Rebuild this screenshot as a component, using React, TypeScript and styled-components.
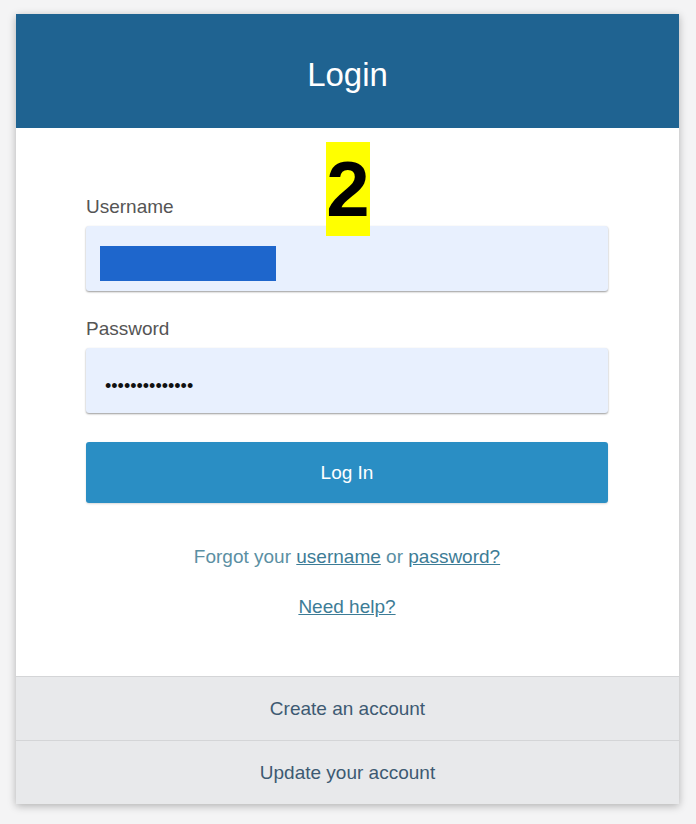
import React from 'react';
import styled, { createGlobalStyle } from 'styled-components';

const GlobalStyle = createGlobalStyle`
  html, body {
    margin: 0;
    padding: 0;
    background: #f4f4f5;
    font-family: "Liberation Sans", Arial, sans-serif;
  }
`;

const Page = styled.div`
  padding: 14px 0 21px 16px;
`;

const Card = styled.div`
  width: 663px;
  background: #ffffff;
  box-shadow: 0 2px 8px rgba(0, 0, 0, 0.28);
  display: flex;
  flex-direction: column;
`;

const Header = styled.div`
  height: 114px;
  background: #1f6391;
  color: #ffffff;
  display: flex;
  align-items: center;
  justify-content: center;
  font-size: 33px;
  padding-top: 8px;
  box-sizing: border-box;
`;

const Body = styled.div`
  position: relative;
  padding: 67px 71px 57px 70px;
  display: flex;
  flex-direction: column;
`;

const Badge = styled.div`
  position: absolute;
  top: 14px;
  left: 310px;
  width: 44px;
  height: 94px;
  background: #ffff00;
  color: #000000;
  font-size: 78px;
  font-weight: bold;
  display: flex;
  align-items: center;
  justify-content: center;
  line-height: 1;
  z-index: 2;
`;

const Group = styled.div<{ $gap?: number }>`
  display: flex;
  flex-direction: column;
  margin-top: ${p => p.$gap ?? 0}px;
`;

const Label = styled.label`
  font-size: 19px;
  line-height: 24px;
  color: #555555;
  margin-bottom: 7px;
`;

const Field = styled.div`
  height: 65px;
  box-sizing: border-box;
  background: #e8f0fe;
  border-radius: 3px;
  box-shadow: 0 1px 2px rgba(0, 0, 0, 0.4);
  display: flex;
  align-items: flex-start;
`;

const Redacted = styled.span`
  display: block;
  width: 176px;
  height: 35px;
  margin: 20px 0 0 14px;
  background: #1e66cc;
`;

const Dots = styled.span`
  font-size: 18px;
  color: #111111;
  margin: 26px 0 0 19px;
  line-height: 24px;
`;

const Button = styled.button`
  margin-top: 29px;
  height: 61px;
  border: none;
  border-radius: 3px;
  background: #2a8ec4;
  color: #ffffff;
  font-family: inherit;
  font-size: 19px;
  cursor: pointer;
  box-shadow: 0 1px 2px rgba(0, 0, 0, 0.15);
`;

const HelpLine = styled.p<{ $gap: number }>`
  margin: ${p => p.$gap}px 0 0;
  text-align: center;
  font-size: 19px;
  line-height: 24px;
  color: #5b8fa3;
`;

const Link = styled.a`
  color: #3d7c96;
  text-decoration: underline;
`;

const FooterRow = styled.div`
  height: 64px;
  background: #e8e9eb;
  border-top: 1px solid #d4d5d7;
  box-sizing: border-box;
  display: flex;
  align-items: center;
  justify-content: center;
  font-size: 19px;
  color: #3d5a72;
`;

export default function App() {
  return (
    <Page>
      <GlobalStyle />
      <Card>
        <Header>Login</Header>
        <Body>
          <Badge>2</Badge>
          <Group>
            <Label>Username</Label>
            <Field>
              <Redacted />
            </Field>
          </Group>
          <Group $gap={26}>
            <Label>Password</Label>
            <Field>
              <Dots>••••••••••••••</Dots>
            </Field>
          </Group>
          <Button>Log In</Button>
          <HelpLine $gap={42}>
            Forgot your <Link>username</Link> or <Link>password?</Link>
          </HelpLine>
          <HelpLine $gap={26}>
            <Link>Need help?</Link>
          </HelpLine>
        </Body>
        <FooterRow>Create an account</FooterRow>
        <FooterRow>Update your account</FooterRow>
      </Card>
    </Page>
  );
}
